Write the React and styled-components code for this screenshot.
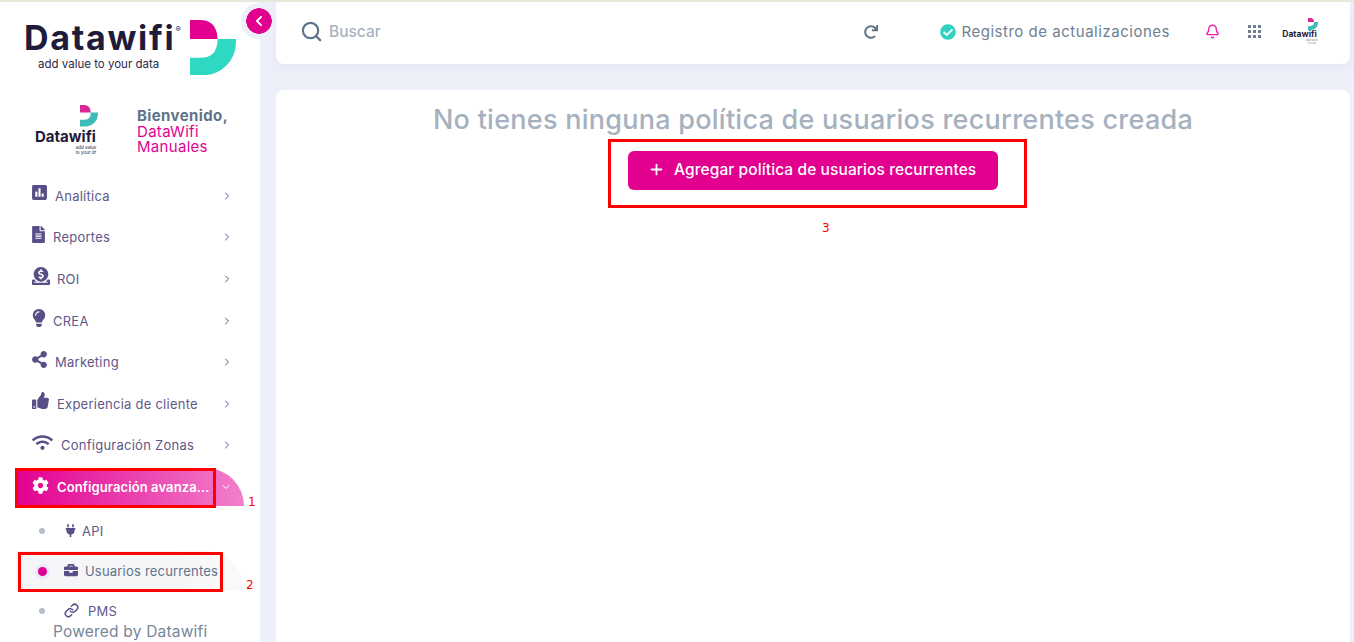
import React from 'react';
import styled, { createGlobalStyle } from 'styled-components';
import {
	FaPoll,
	FaFileAlt,
	FaDonate,
	FaLightbulb,
	FaShareAlt,
	FaThumbsUp,
	FaWifi,
	FaCog,
	FaPlug,
	FaBriefcase,
	FaCheckCircle,
	FaChevronLeft,
	FaRedo,
} from 'react-icons/fa';
import { ChevronRight, ChevronDown, Search, Bell, Plus, Link } from 'lucide-react';

const pink = '#e2008f';
const slate = '#5e7388';
const navText = '#5f5888';
const navIcon = '#5a4e86';

const GlobalStyle = createGlobalStyle`
	html, body { margin: 0; padding: 0; height: 642px; overflow: hidden; }
	body { background: #eef0f9; font-family: Inter, "Open Sans", sans-serif; }
	* { box-sizing: border-box; }
`;

const Page = styled.div`
	position: relative;
	width: 1354px;
	height: 642px;
	overflow: hidden;
	border-top: 2px solid #e8e8da;
	display: grid;
	grid-template-columns: 260px 1fr;
`;

const Sidebar = styled.aside`
	position: relative;
	background: #fff;
	height: 640px;
	display: flex;
	flex-direction: column;
`;

const BrandBlock = styled.div`
	height: 98px;
	padding: 16px 0 0 24px;
	display: flex;
	gap: 2px;
`;

const BrandText = styled.div`
	display: flex;
	flex-direction: column;
	width: 164px;
`;

const BrandName = styled.div`
	font-size: 34px;
	line-height: 40px;
	font-weight: 700;
	letter-spacing: 1.7px;
	color: #1f1b3a;
	white-space: nowrap;
`;

const Registered = styled.sup`
	font-size: 8px;
	font-weight: 400;
	vertical-align: 18px;
	line-height: 0;
	letter-spacing: 0;
`;

const BrandTag = styled.div`
	font-size: 11.5px;
	line-height: 14px;
	margin: -1px 0 0 14px;
	color: #2a2745;
	white-space: nowrap;
`;

const BrandMark = styled.div`
	margin-top: 2px;
`;

const Collapse = styled.button`
	position: absolute;
	left: 241px;
	top: 1px;
	width: 36px;
	height: 36px;
	border-radius: 50%;
	border: 0;
	padding: 0;
	background: radial-gradient(circle, ${pink} 0 12.5px, #eef0f9 13px);
	color: #fff;
	display: flex;
	align-items: center;
	justify-content: center;
`;

const Profile = styled.div`
	height: 75px;
	padding: 5px 0 0 35px;
	display: flex;
	gap: 39px;
`;

const ProfileLogo = styled.div`
	width: 63px;
	display: flex;
	flex-direction: column;
	align-items: flex-end;
`;

const ProfileName = styled.div`
	font-size: 15px;
	line-height: 17px;
	margin-top: 1px;
	font-weight: 700;
	color: #1f1b3a;
	align-self: flex-start;
	white-space: nowrap;
`;

const ProfileTag = styled.div`
	font-size: 4.5px;
	line-height: 5px;
	width: 24px;
	text-align: center;
	color: #2a2745;
`;

const Welcome = styled.div`
	padding-top: 3px;
	font-size: 15px;
	line-height: 15.5px;
	letter-spacing: 0.3px;
	color: ${pink};
`;

const WelcomeTitle = styled.div`
	font-weight: 700;
	letter-spacing: 0.4px;
	color: ${slate};
`;

const Nav = styled.nav`
	display: flex;
	flex-direction: column;
	flex: 1;
	min-height: 0;
`;

const Row = styled.div`
	height: 41.6px;
	padding: 0 27px 0 32px;
	display: flex;
	align-items: center;
	gap: 8px;
	font-size: 13px;
	color: ${navText};
	white-space: nowrap;
	letter-spacing: 0.25px;
`;

const RowIcon = styled.span`
	display: flex;
	justify-content: center;
	flex: none;
	width: ${({ $w }) => $w}px;
	margin-bottom: 6px;
	color: ${navIcon};
	svg { flex: none; }
`;

const RowLabel = styled.span`
	flex: 1;
`;

const ActiveRow = styled.div`
	height: 38px;
	width: 228px;
	margin: 2px 0 0 16px;
	padding: 0 12px 0 16px;
	border-radius: 0 48px 0 0;
	background: linear-gradient(90deg, ${pink}, #f27fcc);
	color: #fff;
	display: flex;
	align-items: center;
	gap: 8px;
	font-size: 13px;
	font-weight: 600;
	letter-spacing: 0.1px;
	white-space: nowrap;
`;

const ActiveIcon = styled.span`
	display: flex;
	margin-bottom: 4px;
`;

const SubList = styled.div`
	display: flex;
	flex-direction: column;
	padding-top: 5px;
`;

const SubRow = styled.div`
	height: 40px;
	margin-left: 16px;
	width: 228px;
	display: flex;
	align-items: center;
	font-size: 13px;
	letter-spacing: 0.2px;
	color: ${({ $active }) => ($active ? slate : navText)};
	white-space: nowrap;
	border-radius: 0 44px 0 0;
	background: ${({ $active }) => ($active ? 'linear-gradient(90deg, #f6f6f9 70%, #fafafc)' : 'transparent')};
`;

const DotSlot = styled.span`
	width: 32px;
	padding-left: 20px;
	display: flex;
	justify-content: center;
	flex: none;
`;

const Dot = styled.span`
	flex: none;
	width: ${({ $active }) => ($active ? '9px' : '6px')};
	height: ${({ $active }) => ($active ? '9px' : '6px')};
	border-radius: 50%;
	background: ${({ $active }) => ($active ? pink : '#b6bfca')};
	box-shadow: ${({ $active }) => ($active ? '0 0 0 3px #e9e9fb' : 'none')};
`;

const SubIcon = styled.span`
	display: flex;
	margin: 0 ${({ $gap }) => $gap}px 2px 16px;
	color: ${navIcon};
`;

const Powered = styled.div`
	margin: -8px 0 0 53px;
	font-size: 15.5px;
	line-height: 18px;
	letter-spacing: 0.2px;
	color: #76879a;
	white-space: nowrap;
`;

const Main = styled.main`
	padding: 0 4px 0 16px;
	display: flex;
	flex-direction: column;
	gap: 26px;
	min-width: 0;
`;

const Header = styled.header`
	height: 62px;
	flex: none;
	background: #fff;
	border-radius: 0 0 8px 8px;
	box-shadow: 0 4px 14px rgba(80, 90, 150, 0.07);
	padding: 0 32px 3px 24px;
	display: flex;
	align-items: center;
	color: ${slate};
`;

const SearchLabel = styled.span`
	margin-left: 6px;
	font-size: 15.5px;
	font-weight: 500;
	color: #a8b2c1;
`;

const Refresh = styled.span`
	margin-left: auto;
	display: flex;
`;

const Updates = styled.div`
	margin-left: 62px;
	display: flex;
	align-items: center;
	gap: 5px;
	font-size: 15px;
	letter-spacing: 0.52px;
	color: #6f7f92;
	white-space: nowrap;
`;

const BellWrap = styled.span`
	margin-left: 35px;
	display: flex;
	color: #f01fa8;
`;

const AppsGrid = styled.span`
	margin-left: 28px;
	width: 13px;
	height: 13px;
	display: grid;
	grid-template-columns: repeat(3, 3px);
	grid-auto-rows: 3px;
	gap: 2px;
`;

const AppsCell = styled.i`
	background: #6f7f92;
`;

const HeaderLogo = styled.div`
	margin-left: 20px;
	width: 37px;
	display: flex;
	flex-direction: column;
	align-items: flex-end;
`;

const HeaderLogoName = styled.div`
	font-size: 8.5px;
	line-height: 9px;
	font-weight: 700;
	color: #1f1b3a;
	align-self: center;
`;

const HeaderLogoTag = styled.div`
	font-size: 2.5px;
	line-height: 3px;
	width: 12px;
	text-align: center;
	color: #6f7f92;
`;

const Content = styled.section`
	flex: 1;
	background: #fff;
	border-radius: 8px 8px 0 0;
	padding-top: 12px;
	display: flex;
	flex-direction: column;
	align-items: center;
`;

const Title = styled.h1`
	margin: 0;
	font-size: 27px;
	line-height: 36px;
	font-weight: 500;
	letter-spacing: 0.26px;
	color: #a6b1c0;
	white-space: nowrap;
`;

const AddButton = styled.button`
	margin-top: 13px;
	width: 370px;
	height: 39px;
	border: 0;
	border-radius: 6px;
	background: ${pink};
	color: #fff;
	padding: 0 0 2px 20px;
	display: flex;
	align-items: center;
	gap: 9px;
	font-family: inherit;
	font-size: 15.5px;
	font-weight: 500;
	letter-spacing: 0.1px;
	white-space: nowrap;
`;

// red marks drawn over the screenshot
const Mark = styled.div`
	position: absolute;
	left: ${({ $x }) => $x}px;
	top: ${({ $y }) => $y}px;
	width: ${({ $w }) => $w}px;
	height: ${({ $h }) => $h}px;
	border: 3px solid #f00;
	pointer-events: none;
`;

const MarkNumber = styled.span`
	position: absolute;
	left: ${({ $x }) => $x}px;
	top: ${({ $y }) => $y}px;
	font-family: "DejaVu Sans", sans-serif;
	font-size: 12px;
	line-height: 15px;
	color: #f00;
`;

const LogoMark = ({ size, top = '#e2008f', bottom = '#2ed8c3' }) => (
	<svg width={size} height={size * 1.2} viewBox="0 0 45 54">
		<path d="M0 0H10Q26 0 27 18.500H0Z" fill={top} />
		<path d="M27 18.500H45V22A32 32 0 0 1 13 54H0V37H10Q27 37 27 18.500Z" fill={bottom} />
	</svg>
);

const items = [
	{ label: 'Analítica', icon: <FaPoll size={17} />, w: 15 },
	{ label: 'Reportes', icon: <FaFileAlt size={17} />, w: 13 },
	{ label: 'ROI', icon: <FaDonate size={18} />, w: 17 },
	{ label: 'CREA', icon: <FaLightbulb size={18} />, w: 13 },
	{ label: 'Marketing', icon: <FaShareAlt size={17} />, w: 15 },
	{ label: 'Experiencia de cliente', icon: <FaThumbsUp size={17} />, w: 17 },
	{ label: 'Configuración Zonas', icon: <FaWifi size={21} />, w: 21 },
];

const subItems = [
	{ label: 'API', icon: <FaPlug size={13} />, gap: 5 },
	{ label: 'Usuarios recurrentes', icon: <FaBriefcase size={14} />, gap: 7, active: true },
	{ label: 'PMS', icon: <Link size={15} strokeWidth={2.4} />, gap: 9 },
];

const App = () => (
	<Page>
		<GlobalStyle />
		<Sidebar>
			<BrandBlock>
				<BrandText>
					<BrandName>
						Datawifi<Registered>®</Registered>
					</BrandName>
					<BrandTag>add value to your data</BrandTag>
				</BrandText>
				<BrandMark>
					<LogoMark size={46} />
				</BrandMark>
			</BrandBlock>
			<Collapse aria-label="Contraer">
				<FaChevronLeft size={12} />
			</Collapse>
			<Profile>
				<ProfileLogo>
					<LogoMark size={18} top="#d92a94" bottom="#40bcb8" />
					<ProfileName>Datawifi</ProfileName>
					<ProfileTag>add value to your dr</ProfileTag>
				</ProfileLogo>
				<Welcome>
					<WelcomeTitle>Bienvenido,</WelcomeTitle>
					DataWifi
					<br />
					Manuales
				</Welcome>
			</Profile>
			<Nav>
				{items.map(({ label, icon, w }) => (
					<Row key={label}>
						<RowIcon $w={w}>{icon}</RowIcon>
						<RowLabel>{label}</RowLabel>
						<ChevronRight size={12} />
					</Row>
				))}
				<ActiveRow>
					<ActiveIcon>
						<FaCog size={17} />
					</ActiveIcon>
					<RowLabel>Configuración avanza...</RowLabel>
					<ChevronDown size={12} />
				</ActiveRow>
				<SubList>
					{subItems.map(({ label, icon, gap, active }) => (
						<SubRow key={label} $active={active}>
							<DotSlot>
								<Dot $active={active} />
							</DotSlot>
							<SubIcon $gap={gap}>{icon}</SubIcon>
							{label}
						</SubRow>
					))}
				</SubList>
				<Powered>Powered by Datawifi</Powered>
			</Nav>
		</Sidebar>
		<Main>
			<Header>
				<Search size={23} strokeWidth={2.3} />
				<SearchLabel>Buscar</SearchLabel>
				<Refresh>
					<FaRedo size={14} />
				</Refresh>
				<Updates>
					<FaCheckCircle size={16} color="#2ed3c0" />
					Registro de actualizaciones
				</Updates>
				<BellWrap>
					<Bell size={15} strokeWidth={2.2} />
				</BellWrap>
				<AppsGrid>
					{Array.from({ length: 9 }, (_, i) => (
						<AppsCell key={i} />
					))}
				</AppsGrid>
				<HeaderLogo>
					<LogoMark size={10} top="#d92a94" bottom="#40bcb8" />
					<HeaderLogoName>Datawifi</HeaderLogoName>
					<HeaderLogoTag>add value to your</HeaderLogoTag>
				</HeaderLogo>
			</Header>
			<Content>
				<Title>No tienes ninguna política de usuarios recurrentes creada</Title>
				<AddButton>
					<Plus size={17} strokeWidth={2.5} />
					Agregar política de usuarios recurrentes
				</AddButton>
			</Content>
		</Main>
		<Mark $x={15} $y={466} $w={201} $h={40} />
		<Mark $x={18} $y={550} $w={205} $h={40} />
		<Mark $x={608} $y={137} $w={419} $h={69} />
		<MarkNumber $x={248} $y={493}>1</MarkNumber>
		<MarkNumber $x={246} $y={576}>2</MarkNumber>
		<MarkNumber $x={822} $y={219}>3</MarkNumber>
	</Page>
);

export default App;
